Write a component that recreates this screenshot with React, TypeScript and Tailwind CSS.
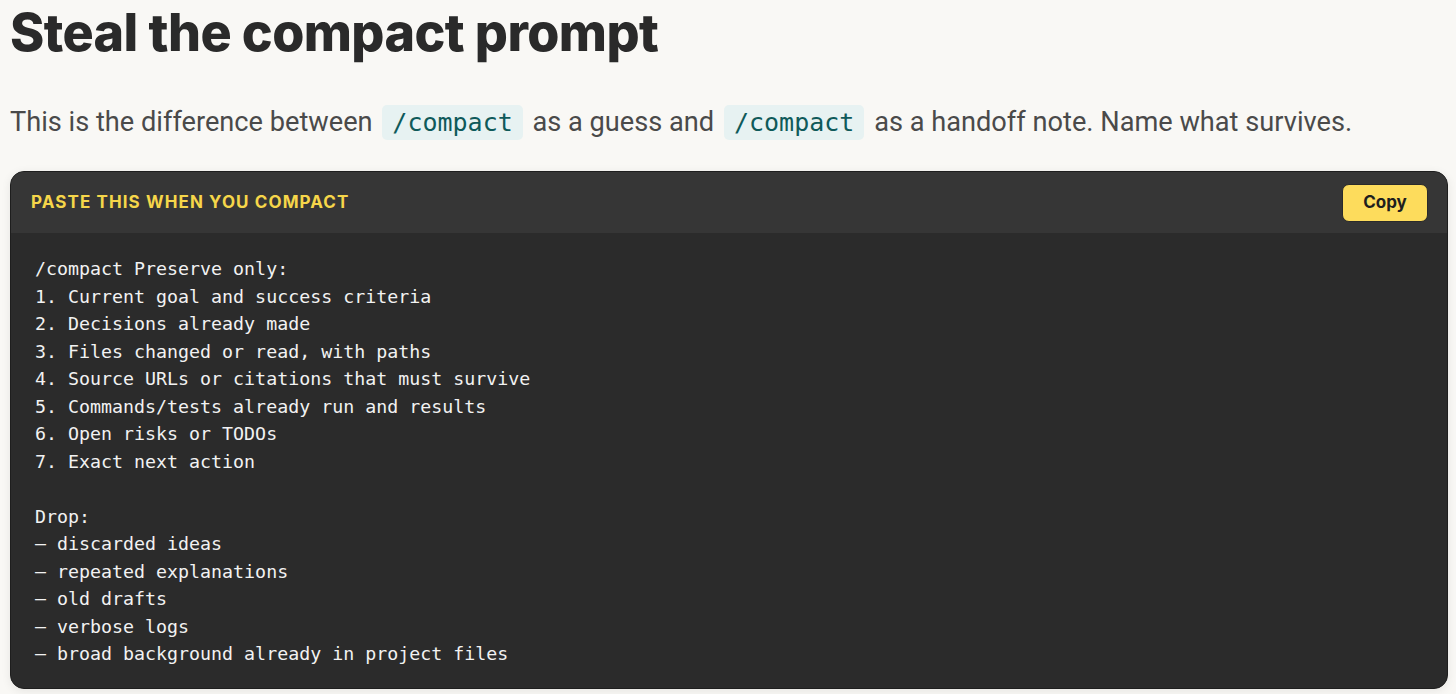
const lines = [
  "/compact Preserve only:",
  "1. Current goal and success criteria",
  "2. Decisions already made",
  "3. Files changed or read, with paths",
  "4. Source URLs or citations that must survive",
  "5. Commands/tests already run and results",
  "6. Open risks or TODOs",
  "7. Exact next action",
  "",
  "Drop:",
  "– discarded ideas",
  "– repeated explanations",
  "– old drafts",
  "– verbose logs",
  "– broad background already in project files",
];

function InlineCode({ children }: { children: string }) {
  return (
    <code className="mx-[3px] rounded-[5px] bg-[#e7f2f2] px-[10px] py-[3px] font-['DejaVu_Sans_Mono',monospace] text-[25px] text-[#0f5a5a]">
      {children}
    </code>
  );
}

export default function App() {
  return (
    <div className="min-h-screen bg-[#f9f8f5] pl-[10px] pr-[8px] pt-[5px]">
      <h1 className="font-['Inter',sans-serif] text-[52px] font-extrabold leading-[56px] tracking-[-0.6px] text-[#2a2a2a]">
        Steal the compact prompt
      </h1>
      <p className="mt-[40px] font-['Roboto',sans-serif] text-[27.2px] leading-[42px] text-[#4a4a4a]">
        This is the difference between <InlineCode>/compact</InlineCode> as a guess and{" "}
        <InlineCode>/compact</InlineCode> as a handoff note. Name what survives.
      </p>

      <section className="mt-[27px] overflow-hidden rounded-[14px] border border-[#1e1e1e] bg-[#2b2b2b] shadow-[0_2px_10px_rgba(0,0,0,0.08)]">
        <div className="flex h-[61px] items-center justify-between bg-[#363636] pl-[20px] pr-[19px]">
          <span className="font-['Inter',sans-serif] text-[17px] font-bold uppercase tracking-[1.1px] text-[#f6d64a]">
            Paste this when you compact
          </span>
          <button className="h-[38px] w-[86px] rounded-[7px] border border-[#2a2a2a] bg-[#fddc5c] font-['Inter',sans-serif] text-[17px] font-bold text-[#1e1e1e]">
            Copy
          </button>
        </div>
        <pre className="px-[24px] pb-[20px] pt-[22px] font-['DejaVu_Sans_Mono',monospace] text-[18.3px] leading-[27.5px] text-[#f2f2f2]">
          {lines.map((l, i) => (
            <div key={i}>{l || "\u00a0"}</div>
          ))}
        </pre>
      </section>
    </div>
  );
}
